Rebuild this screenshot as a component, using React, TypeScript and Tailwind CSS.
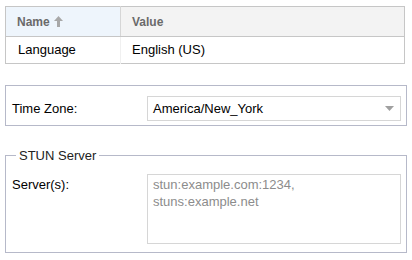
import React from 'react';

function SortArrow() {
  return (
    <svg width="9" height="11" viewBox="0 0 9 11" className="ml-1 inline-block">
      <polygon points="4.5,0 9,5 0,5" fill="#a8a8a8" />
      <rect x="3" y="4" width="3" height="7" fill="#a8a8a8" />
    </svg>
  );
}

export default function App() {
  return (
    <div className="w-[412px] h-[260px] bg-white text-[13px] text-black font-['Liberation_Sans',Arial,sans-serif] pt-[6px] px-[5px] overflow-hidden">
      {/* Preferences table */}
      <table className="w-[400px] border-collapse border border-[#c6c6c6]">
        <thead>
          <tr className="h-[30px] text-[12px] font-bold text-[#6a6a6a]">
            <th className="w-[115px] text-left pl-[11px] bg-[#eef5fc] border-b border-r border-[#d6d6d6] border-b-[#c6c6c6]">
              <span className="inline-flex items-center">
                Name
                <SortArrow />
              </span>
            </th>
            <th className="text-left pl-[11px] bg-[#f3f3f3] border-b border-[#c6c6c6]">Value</th>
          </tr>
        </thead>
        <tbody>
          <tr className="h-[27px]">
            <td className="pl-[12px] border-r border-[#f0f0f0]">Language</td>
            <td className="pl-[11px]">English (US)</td>
          </tr>
        </tbody>
      </table>

      {/* Time zone */}
      <div className="mt-[21px] h-[41px] border border-[#b6b9c9] flex items-start pt-[10px] pl-[6px] pr-[5px]">
        <div className="w-[135px] h-[25px] flex items-center">Time Zone:</div>
        <div className="flex-1 h-[25px] border border-[#d6d6d6] flex items-center justify-between pl-[5px] pr-[6px]">
          <span>America/New_York</span>
          <svg width="9" height="5" viewBox="0 0 9 5">
            <polygon points="0,0 9,0 4.5,5" fill="#a0a0a0" />
          </svg>
        </div>
      </div>

      {/* STUN server */}
      <fieldset className="mt-[22px] border border-[#b6b9c9] pl-[6px] pr-[5px] pb-[8px]">
        <legend className="ml-[4px] px-[3px] leading-[15px] text-[#222]">STUN Server</legend>
        <div className="flex items-start mt-[11px]">
          <div className="w-[135px] pt-[2px] leading-[17px]">Server(s):</div>
          <textarea
            className="flex-1 h-[70px] border border-[#d6d6d6] resize-none px-[5px] pt-[1px] leading-[17px] text-[13px] outline-none placeholder:text-[#8c8c8c]"
            placeholder={'stun:example.com:1234,\nstuns:example.net'}
          />
        </div>
      </fieldset>
    </div>
  );
}
